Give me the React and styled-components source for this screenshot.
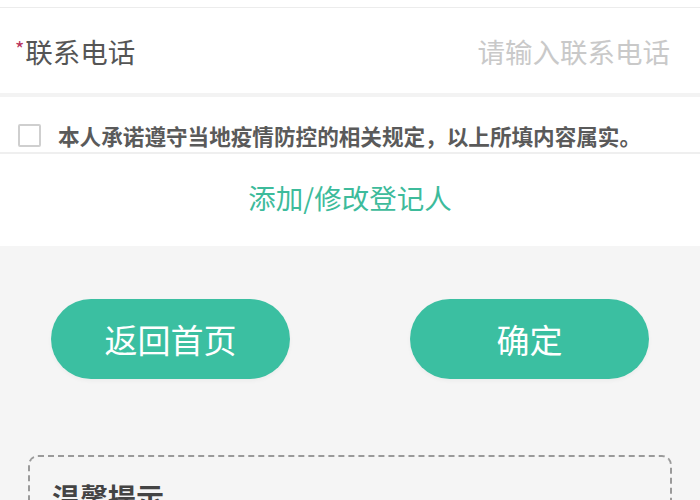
import React from 'react';
import styled, { createGlobalStyle } from 'styled-components';

const GlobalStyle = createGlobalStyle`
  html, body {
    margin: 0;
    padding: 0;
    background: #f5f5f5;
  }
  body {
    font-family: "Noto Sans CJK SC", "Noto Sans", sans-serif;
  }
`;

const Page = styled.div`
  width: 700px;
  min-height: 500px;
  background: #f5f5f5;
  overflow: hidden;
`;

const TopStrip = styled.div`
  height: 7px;
  background: #fff;
  border-bottom: 1px solid #ececec;
`;

const FieldRow = styled.div`
  height: 85px;
  background: #fff;
  display: flex;
  align-items: center;
  justify-content: space-between;
  padding: 0 30px 0 15px;
`;

const Label = styled.div`
  font-size: 27.5px;
  color: #555;
  display: flex;
  align-items: flex-start;
`;

const Star = styled.span`
  color: #b8325c;
  font-size: 20px;
  line-height: 1;
  margin-top: 8px;
  margin-right: 1px;
`;

const Placeholder = styled.div`
  font-size: 27.5px;
  color: #c9c9c9;
`;

const Divider = styled.div`
  height: ${(p) => p.h}px;
  background: ${(p) => p.c};
`;

const AgreeRow = styled.div`
  height: 55px;
  background: #fff;
  display: flex;
  align-items: flex-end;
  gap: 17px;
  padding: 0 0 5px 18px;
  box-sizing: border-box;
`;

const Box = styled.div`
  width: 19px;
  height: 19px;
  border: 2px solid #cfcfcf;
  border-radius: 2px;
  background: #fff;
  flex: none;
`;

const AgreeText = styled.div`
  font-size: 21.6px;
  font-weight: 700;
  color: #5a5a5a;
  line-height: 30px;
  margin-bottom: -4px;
  white-space: nowrap;
`;

const AddRow = styled.div`
  height: 92px;
  background: #fff;
  display: flex;
  align-items: center;
  justify-content: center;
  padding-bottom: 6px;
  box-sizing: border-box;
`;

const AddLink = styled.div`
  font-size: 27.5px;
  color: #3dbb9b;
`;

const Actions = styled.div`
  display: flex;
  gap: 120px;
  padding: 53px 0 0 51px;
`;

const PillButton = styled.button`
  width: 239px;
  height: 80px;
  border: none;
  border-radius: 40px;
  background: #3bbfa1;
  color: #fff;
  font-family: inherit;
  font-size: 33px;
  padding: 0;
  box-shadow: 0 2px 4px rgba(0, 0, 0, 0.04);
`;

const Notice = styled.div`
  margin: 76px 28px 0;
  border: 2px dashed #9a9a9a;
  border-radius: 10px;
  padding: 20px 22px 20px;
  min-height: 120px;
`;

const NoticeTitle = styled.div`
  font-size: 28px;
  font-weight: 700;
  color: #444;
  line-height: 40px;
`;

export default function App() {
  return (
    <Page>
      <GlobalStyle />
      <TopStrip />
      <FieldRow>
        <Label>
          <Star>*</Star>联系电话
        </Label>
        <Placeholder>请输入联系电话</Placeholder>
      </FieldRow>
      <Divider h={4} c="#f3f3f3" />
      <AgreeRow>
        <Box />
        <AgreeText>本人承诺遵守当地疫情防控的相关规定，以上所填内容属实。</AgreeText>
      </AgreeRow>
      <Divider h={2} c="#efefef" />
      <AddRow>
        <AddLink>添加/修改登记人</AddLink>
      </AddRow>
      <Actions>
        <PillButton>返回首页</PillButton>
        <PillButton>确定</PillButton>
      </Actions>
      <Notice>
        <NoticeTitle>温馨提示</NoticeTitle>
      </Notice>
    </Page>
  );
}
